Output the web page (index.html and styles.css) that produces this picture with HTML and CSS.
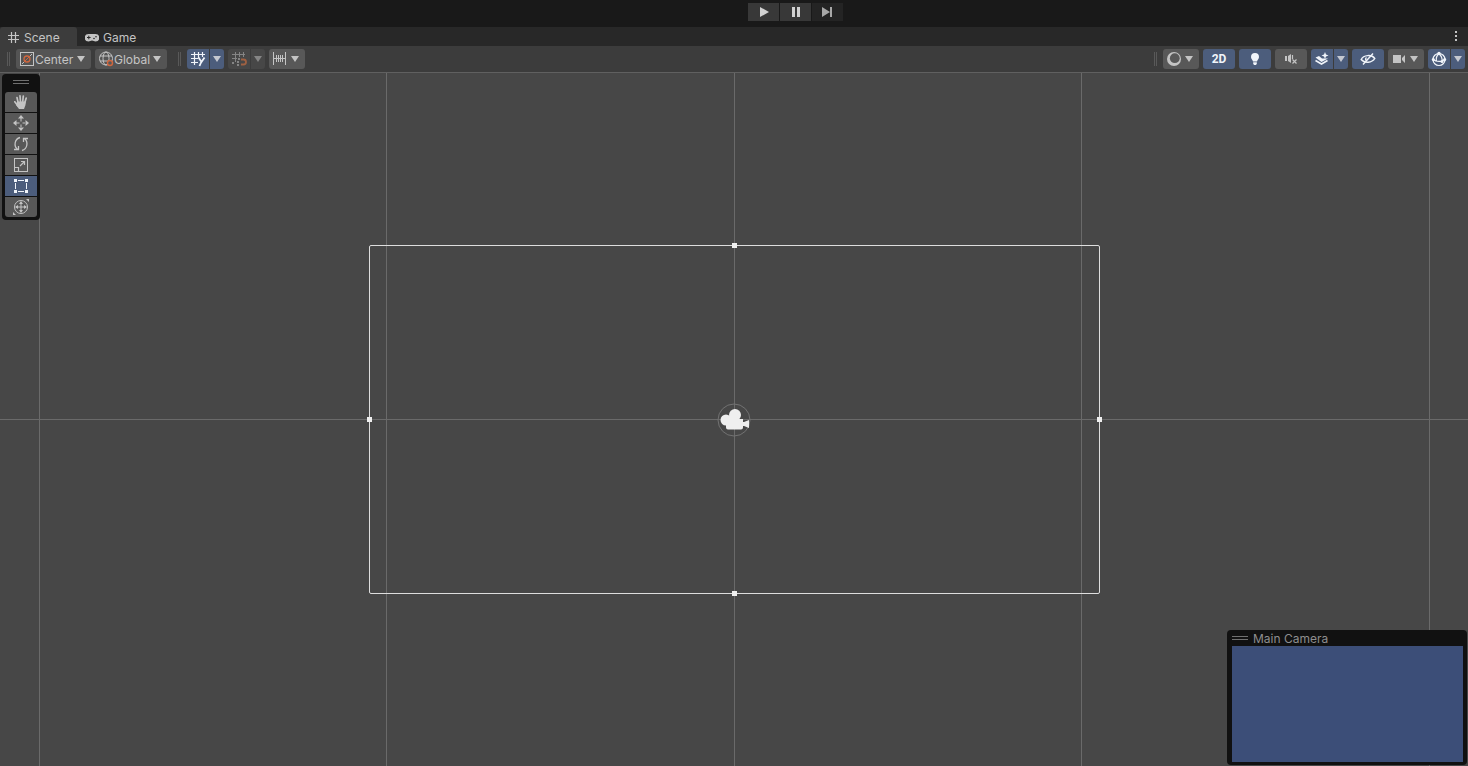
FILE: index.html
```html
<!DOCTYPE html>
<html lang="en">
<head>
    <meta charset="UTF-8">
    <meta name="viewport" content="width=device-width, initial-scale=1.0">
    <title>Scene</title>
    <link rel="stylesheet" href="styles.css">
</head>
<body>

<!-- Play controls -->
<header class="playbar">
    <button type="button" class="play-btn" aria-label="Play">
        <svg width="16" height="16" viewBox="0 0 16 16"><path d="M4 3l9 5-9 5z" fill="currentColor"/></svg>
    </button>
    <button type="button" class="play-btn" aria-label="Pause">
        <svg width="16" height="16" viewBox="0 0 16 16"><path d="M4 3h3v10H4zM9 3h3v10H9z" fill="currentColor"/></svg>
    </button>
    <button type="button" class="play-btn dim" aria-label="Step">
        <svg width="16" height="16" viewBox="0 0 16 16"><path d="M2 3l8 5-8 5zM10 3h2v10h-2z" fill="currentColor"/></svg>
    </button>
</header>

<!-- Tabs -->
<nav class="tabs">
    <button type="button" class="tab active">
        <svg width="12" height="12" viewBox="0 0 12 12"><path d="M3.500 0v11M7.500 0v11M0 3.500h11M0 7.500h11" stroke="currentColor" stroke-width="1.200"/></svg>
        Scene
    </button>
    <button type="button" class="tab">
        <svg width="14" height="12" viewBox="0 0 14 12"><path d="M3.500 2h7a3.500 3.500 0 0 1 0 7.500c-1.400 0-2-1-3.500-1s-2.100 1-3.500 1a3.500 3.500 0 0 1 0-7.500z" fill="currentColor"/><path d="M2 5.500h3.600M3.800 3.700v3.600" stroke="#282828"/><circle cx="9" cy="6.500" r=".8" fill="#282828"/><circle cx="11" cy="4.700" r=".8" fill="#282828"/></svg>
        Game
    </button>
    <button type="button" class="more" aria-label="More">
        <svg width="4" height="12" viewBox="0 0 4 12" fill="currentColor"><path d="M1 0h2v2H1zM1 4h2v2H1zM1 8h2v2H1z"/></svg>
    </button>
</nav>

<!-- Toolbar -->
<div class="toolbar">
    <span class="grip"></span>
    <label class="dropdown center">
        <svg width="16" height="16" viewBox="0 0 16 16" fill="none"><rect x="1.500" y="1.500" width="13" height="13" stroke="#c4c4c4"/><path d="M3 13l2.500-2.500M10.500 5.500L13 3" stroke="#c4c4c4"/><circle cx="8" cy="8" r="3" stroke="#d0673f" stroke-width="1.300"/><path d="M5 11l6-6" stroke="#d0673f"/></svg>
        <select aria-label="Tool handle position">
            <option>Center</option>
            <option>Pivot</option>
        </select>
        <svg class="caret" width="8" height="6" viewBox="0 0 8 6"><path d="M0 0h8L4 6z" fill="currentColor"/></svg>
    </label>
    <label class="dropdown global">
        <svg width="16" height="16" viewBox="0 0 16 16" fill="none"><g stroke="#c4c4c4"><circle cx="8" cy="7.500" r="6.500"/><ellipse cx="8" cy="7.500" rx="3" ry="6.500"/><path d="M2 5h12M2 10h12"/></g><circle cx="12" cy="12" r="2.500" fill="#585858" stroke="#d0673f" stroke-width="1.400"/></svg>
        <select aria-label="Tool handle rotation">
            <option>Global</option>
            <option>Local</option>
        </select>
        <svg class="caret" width="8" height="6" viewBox="0 0 8 6"><path d="M0 0h8L4 6z" fill="currentColor"/></svg>
    </label>

    <span class="grip second"></span>
    <div class="split on">
        <button type="button" aria-label="Grid visibility">
            <svg width="16" height="16" viewBox="0 0 16 16" fill="none"><path d="M4.500 1v13M8.500 1v6M12.500 1v5M1 3.500h14M1 7.500h7M1 11.500h7" stroke="currentColor" stroke-width="1.200"/><path d="M8.500 6.500l3 4.500 3-4.500M11.700 10l-2.200 5" stroke="currentColor" stroke-width="1.800"/></svg>
        </button>
        <button type="button" class="arrow" aria-label="Grid options">
            <svg width="8" height="6" viewBox="0 0 8 6"><path d="M0 0h8L4 6z" fill="currentColor"/></svg>
        </button>
    </div>
    <div class="split off">
        <button type="button" aria-label="Grid snapping">
            <svg width="16" height="16" viewBox="0 0 16 16" fill="none"><path d="M4.500 1v10M8.500 1v5M12.500 1v5M1 3.500h13M1 7.500h5" stroke="currentColor"/><path d="M1 11h2v2H1zM6 10h2v2H6zM7 7h2v2H7zM6 13h2v2H6z" fill="currentColor"/><path d="M10 8.500h2.500a2.500 2.500 0 0 1 0 5H10" stroke="#a06142" stroke-width="1.800"/></svg>
        </button>
        <button type="button" class="arrow" aria-label="Snapping options">
            <svg width="8" height="6" viewBox="0 0 8 6"><path d="M0 0h8L4 6z" fill="currentColor"/></svg>
        </button>
    </div>
    <button type="button" class="tool-btn menu" aria-label="Snap increment">
        <svg width="16" height="16" viewBox="0 0 16 16"><path d="M1.500 1v13M4.500 4v7M6.500 4v7M8.500 4v7M10.500 4v7M13.500 1v13M1 7.500h13" stroke="currentColor" fill="none"/></svg>
        <svg width="8" height="6" viewBox="0 0 8 6"><path d="M0 0h8L4 6z" fill="currentColor"/></svg>
    </button>

    <div class="toolbar-right">
        <span class="grip"></span>
        <button type="button" class="tool-btn menu" aria-label="Draw mode">
            <svg width="16" height="16" viewBox="0 0 16 16"><circle cx="8" cy="8" r="7" fill="currentColor"/><circle cx="8.800" cy="7.200" r="4.900" fill="#585858"/></svg>
            <svg width="8" height="6" viewBox="0 0 8 6"><path d="M0 0h8L4 6z" fill="currentColor"/></svg>
        </button>
        <button type="button" class="tool-btn on text">2D</button>
        <button type="button" class="tool-btn on" aria-label="Lighting">
            <svg width="16" height="16" viewBox="0 0 16 16" fill="currentColor"><path d="M8 2a4 4 0 0 1 4 4c0 2-1.500 2.500-2 4.500H6C5.500 8.500 4 8 4 6a4 4 0 0 1 4-4z"/><path d="M6.200 11.200h3.600v1.500L9 14H7l-.8-1.300z"/></svg>
        </button>
        <button type="button" class="tool-btn" aria-label="Audio">
            <svg width="16" height="16" viewBox="0 0 16 16" fill="none" stroke="currentColor"><path d="M3 5v5" stroke-width="2"/><path d="M5 5l3-2v9l-3-2z" fill="currentColor" stroke="none"/><path d="M9.500 4v4" stroke-width="1.200"/><path d="M9.500 8.500l4 4M13.500 8.500l-4 4" stroke-width="1.200"/></svg>
        </button>
        <div class="split on">
            <button type="button" aria-label="Effects">
                <svg width="16" height="16" viewBox="0 0 16 16"><path d="M1.500 6.500L5 5l3 2.500L14 7.500 7.500 11z" fill="currentColor"/><path d="M1.500 9.500l6 3.500 6-3.500" fill="none" stroke="currentColor" stroke-width="1.600"/><path d="M11 1l1 2.500 2.500 1L12 5.500 11 8l-1-2.500-2.500-1 2.500-1z" fill="currentColor"/></svg>
            </button>
            <button type="button" class="arrow" aria-label="Effects options">
                <svg width="8" height="6" viewBox="0 0 8 6"><path d="M0 0h8L4 6z" fill="currentColor"/></svg>
            </button>
        </div>
        <button type="button" class="tool-btn on" aria-label="Scene visibility">
            <svg width="16" height="16" viewBox="0 0 16 16" fill="none" stroke="currentColor" stroke-width="1.400"><path d="M1.200 8.500C3.500 4 11.500 3 14.800 7.500 12 12 4.500 12.500 1.200 8.500z"/><path d="M6.500 6.500a2.200 2.200 0 0 0 0 3.500M3 13.500l10-11"/></svg>
        </button>
        <button type="button" class="tool-btn menu" aria-label="Camera settings">
            <svg width="16" height="16" viewBox="0 0 16 16" fill="currentColor"><path d="M2 4h8v8H2zM11 7l3-3v8l-3-3z"/></svg>
            <svg width="8" height="6" viewBox="0 0 8 6"><path d="M0 0h8L4 6z" fill="currentColor"/></svg>
        </button>
        <div class="split on">
            <button type="button" aria-label="Gizmos">
                <svg width="16" height="16" viewBox="0 0 16 16" fill="none" stroke="currentColor" stroke-width="1.200"><circle cx="8" cy="8.500" r="6"/><path d="M8 2.500C5 5 5 8 5.500 10.500M8 2.500c3 3 3.500 6 3 8.500M2 8.500c3 2.500 9 2.500 12 0"/><g fill="currentColor" stroke="none"><circle cx="8" cy="2.500" r="1.700"/><circle cx="2.300" cy="8.500" r="1.500"/><circle cx="13.700" cy="8.500" r="1.500"/><circle cx="11" cy="10.500" r="1.500"/></g></svg>
            </button>
            <button type="button" class="arrow" aria-label="Gizmo options">
                <svg width="8" height="6" viewBox="0 0 8 6"><path d="M0 0h8L4 6z" fill="currentColor"/></svg>
            </button>
        </div>
    </div>
</div>

<!-- Scene view -->
<main class="scene">
    <span class="line v v1"></span>
    <span class="line v v2"></span>
    <span class="line v v3"></span>
    <span class="line v v4"></span>
    <span class="line v v5"></span>
    <span class="line h"></span>

    <div class="frame">
        <span class="handle top"></span>
        <span class="handle right"></span>
        <span class="handle bottom"></span>
        <span class="handle left"></span>
        <svg class="camera" width="34" height="34" viewBox="0 0 34 34"><circle cx="17" cy="17" r="16" fill="none" stroke="#727272"/><g fill="#efefef"><circle cx="9" cy="17" r="5.500"/><circle cx="18" cy="12" r="6"/><path d="M9 16h17v3h1l5-2v8l-5-2h-1v1.500a2 2 0 0 1-2 2H11a2 2 0 0 1-2-2z"/></g></svg>
    </div>

    <div class="tools">
        <span class="bars"></span>
        <button type="button" aria-label="Hand">
            <svg width="16" height="16" viewBox="0 0 16 16"><path d="M5.200 9L4 3.500M7.500 8L7 1.800M9.700 8l.6-6M11.700 9l1.500-5M5 12L1.800 7.800" stroke="currentColor" stroke-width="1.700" stroke-linecap="round"/><path d="M4.200 7.500h8.600L12.500 11 11 15H6l-3-4z" fill="currentColor"/></svg>
        </button>
        <button type="button" aria-label="Move">
            <svg width="16" height="16" viewBox="0 0 16 16" fill="currentColor"><path d="M8 0l3 3.500H5zM8 16l3-3.500H5zM0 8l3.500-3v6zM16 8l-3.500-3v6zM7.500 3h1v3.500h-1zM7.500 9.500h1V13h-1zM3 7.500h3.500v1H3zM9.500 7.500H13v1H9.500z"/></svg>
        </button>
        <button type="button" aria-label="Rotate">
            <svg width="16" height="16" viewBox="0 0 16 16" fill="none" stroke="currentColor" stroke-width="1.300"><path d="M7 1.500C1.500 3 .5 10 4.500 13.500M9 14.500c5.500-1.500 6.500-8.500 2.500-12"/><path d="M1 13.500h4.500V10M15 2.500h-4.500V6"/></svg>
        </button>
        <button type="button" aria-label="Scale">
            <svg width="16" height="16" viewBox="0 0 16 16" fill="none" stroke="currentColor"><rect x="1.500" y="1.500" width="13" height="13"/><path d="M1.500 10.500h4v4M7 9l4.500-4.500M8 4.500h3.500V8" stroke-width="1.200"/></svg>
        </button>
        <button type="button" class="on" aria-label="Rect">
            <svg width="16" height="16" viewBox="0 0 16 16"><path d="M2.500 5v6M13.500 5v6M5 2.500h6M5 13.500h6" stroke="currentColor"/><path d="M1 1h3v3H1zM12 1h3v3h-3zM1 12h3v3H1zM12 12h3v3h-3z" fill="currentColor"/></svg>
        </button>
        <button type="button" aria-label="Transform">
            <svg width="16" height="16" viewBox="0 0 16 16" fill="none" stroke="currentColor"><circle cx="8" cy="8" r="6.500"/><path d="M8 3v10M3 8h10"/><path d="M8 2l2 3H6zM8 14l2-3H6zM2 8l3-2v4zM14 8l-3-2v4zM13 0h3v3zM0 13v3h3z" fill="currentColor" stroke="none"/></svg>
        </button>
    </div>

    <section class="preview">
        <h2><span class="bars"></span>Main Camera</h2>
        <div class="preview-view"></div>
    </section>
</main>

</body>
</html>
```

FILE: styles.css
```css
* {
    box-sizing: border-box;
}

body {
    margin: 0;
    height: 100vh;
    display: flex;
    flex-direction: column;
    overflow: hidden;
    background-color: #191919;
    color: #c4c4c4;
    font-family: Inter, "Liberation Sans", sans-serif;
    font-size: 12px;
}

button {
    display: flex;
    align-items: center;
    justify-content: center;
    padding: 0;
    border: none;
    background-color: #585858;
    color: #c4c4c4;
    font: inherit;
}

svg {
    flex: none;
}

/* Play controls */
.playbar {
    display: flex;
    gap: 1px;
    height: 27px;
    padding-top: 3px;
    padding-left: calc(50% + 14px);
}

.play-btn {
    width: 31px;
    height: 18px;
    background-color: #383838;
    color: #d2d2d2;
}

.play-btn.dim {
    background-color: #242424;
    color: #a8a8a8;
}

/* Tabs */
.tabs {
    display: flex;
    height: 19px;
    background-color: #282828;
}

.tab {
    gap: 4px;
    padding: 2px 8px 0;
    background-color: transparent;
}

.tab.active {
    width: 77px;
    justify-content: flex-start;
    background-color: #3c3c3c;
    border-radius: 3px 3px 0 0;
}

.more {
    margin-left: auto;
    width: 24px;
    background-color: transparent;
}

/* Toolbar */
.toolbar {
    display: flex;
    align-items: center;
    gap: 4px;
    height: 27px;
    padding: 0 3px 0 7px;
    background-color: #3c3c3c;
    border-bottom: 1px solid #606060;
}

.toolbar-right {
    display: flex;
    align-items: center;
    gap: 4px;
    margin-left: auto;
}

.grip {
    width: 3px;
    height: 14px;
    margin-right: 2px;
    border: solid #595959;
    border-width: 0 1px;
}

.grip.second {
    margin-left: 7px;
}

.dropdown {
    display: flex;
    align-items: center;
    height: 20px;
    padding: 0 6px 0 3px;
    background-color: #545454;
    border-radius: 3px;
}

.dropdown.center {
    width: 75px;
}

.dropdown.global {
    width: 72px;
}

.dropdown select {
    flex: 1;
    min-width: 0;
    padding: 0;
    border: none;
    appearance: none;
    background-color: transparent;
    color: #c4c4c4;
    font: inherit;
}

.tool-btn {
    width: 32px;
    height: 20px;
    border-radius: 3px;
}

.tool-btn.menu {
    width: 36px;
    gap: 3px;
    justify-content: flex-start;
    padding-left: 3px;
}

.tool-btn.text {
    font-family: Roboto, "Liberation Sans", sans-serif;
    font-size: 12px;
    font-weight: 700;
}

.split {
    display: flex;
    gap: 1px;
    height: 20px;
}

.split button {
    width: 22px;
    border-radius: 3px 0 0 3px;
}

.split .arrow {
    width: 14px;
    border-radius: 0 3px 3px 0;
}

.split.off button {
    background-color: #474747;
    color: #858585;
}

.tool-btn.on,
.split.on button,
.tools .on {
    background-color: #4c5d7c;
    color: #f0f4fa;
}

.split.on .arrow {
    color: #c4c8d0;
}

/* Scene view */
.scene {
    position: relative;
    flex: 1;
    overflow: hidden;
    background-color: #474747;
}

.line {
    position: absolute;
    background-color: #6a6a6a;
}

.line.v {
    top: 0;
    bottom: 0;
    width: 1px;
}

.line.h {
    left: 0;
    right: 0;
    top: calc(50% - 1px);
    height: 1px;
}

.v1 { left: calc(50% - 695px); }
.v2 { left: calc(50% - 348px); }
.v3 { left: 50%; }
.v4 { left: calc(50% + 347px); }
.v5 { left: calc(50% + 695px); }

.frame {
    position: absolute;
    left: calc(50% - 365px);
    top: calc(50% - 175px);
    width: 731px;
    height: 349px;
    border: 1px solid #dedede;
    border-radius: 2px;
}

.handle {
    position: absolute;
    width: 5px;
    height: 5px;
    background-color: #efefef;
}

.handle.top { top: -3px; left: calc(50% - 3px); }
.handle.bottom { bottom: -3px; left: calc(50% - 3px); }
.handle.left { left: -3px; top: calc(50% - 2px); }
.handle.right { right: -3px; top: calc(50% - 2px); }

.camera {
    position: absolute;
    left: calc(50% - 18px);
    top: calc(50% - 16px);
}

.bars {
    width: 16px;
    height: 4px;
    border: solid #707070;
    border-width: 1px 0;
}

/* Floating tools */
.tools {
    position: absolute;
    left: 2px;
    top: 1px;
    display: flex;
    flex-direction: column;
    align-items: center;
    gap: 1px;
    width: 38px;
    padding: 6px 3px 3px;
    background-color: #111111;
    border-radius: 4px;
}

.tools .bars {
    margin-bottom: 7px;
}

.tools button {
    width: 32px;
    height: 20px;
}

.tools button:first-of-type {
    border-radius: 3px 3px 0 0;
}

.tools button:last-of-type {
    border-radius: 0 0 3px 3px;
}

/* Camera preview */
.preview {
    position: absolute;
    right: 1px;
    bottom: 1px;
    width: 240px;
    padding: 0 4px 3px 5px;
    background-color: #111111;
    border-radius: 4px;
}

.preview h2 {
    display: flex;
    align-items: center;
    gap: 5px;
    height: 16px;
    margin: 0;
    color: #8e8e8e;
    font-size: 12px;
    font-weight: 400;
}

.preview-view {
    height: 116px;
    background-color: #3c4e78;
}
```
